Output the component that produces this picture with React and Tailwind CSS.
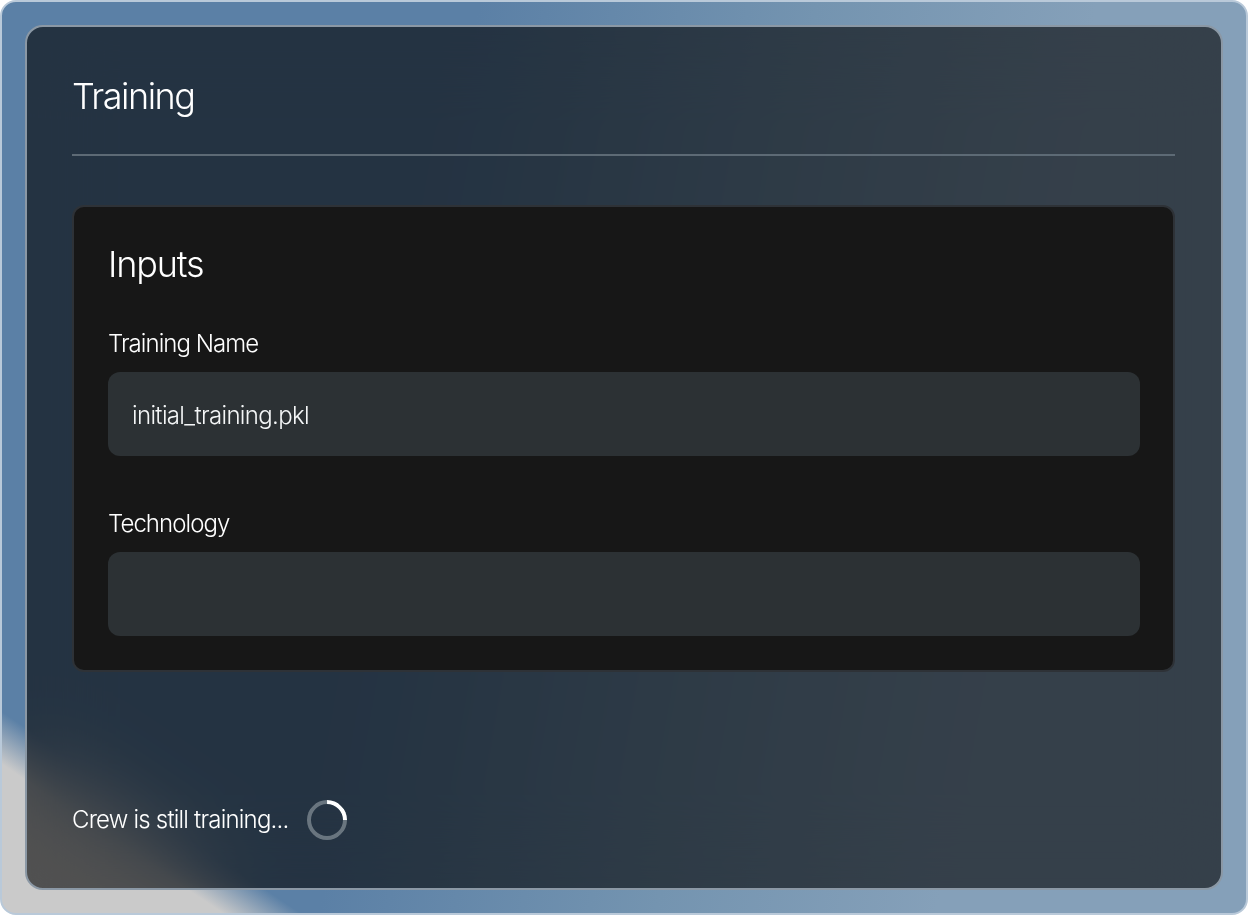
export default function App() {
  const field = "h-[84px] w-full rounded-xl bg-[#2c3134] px-6 pt-[3px] flex items-center text-[24px] font-[350] text-[#f4f6f7] tracking-[-0.65px]";
  return (
    <div className="h-[915px] w-[1248px] overflow-hidden bg-white font-['Inter',sans-serif]">
      <div className="h-[915px] w-[1248px] rounded-[16px] border-[2px] border-[#b9c9d9] p-[23px] bg-[linear-gradient(214deg,transparent_88.5%,#cacaca_91.5%),linear-gradient(100deg,#5b80a6_0%,#5b80a6_34%,#7494b0_58%,#85a0b9_78%,#85a0b9_100%)]">
        <div className="flex h-[865px] w-[1198px] flex-col rounded-[18px] border-2 border-[#8b98a5] bg-black/60 pl-[45px] pr-[46px] pt-[45px] backdrop-blur-2xl">
          <h1 className="text-[36px] leading-[48px] font-[350] text-white tracking-[-1.5px]">Training</h1>
          <div className="mt-[34px] h-[2px] w-full bg-[#5d6a75]" />
          <div className="mt-[49px] flex h-[467px] flex-col rounded-xl border-2 border-[#2e3237] bg-[#171717] pl-[34px] pr-[33px] pt-[33px] text-white">
            <h2 className="text-[36px] leading-[48px] font-[350] tracking-[-1.2px]">Inputs</h2>
            <label className="mt-[40px] text-[24px] leading-[32px] font-[350] tracking-[-0.95px]">Training Name</label>
            <div className={"mt-[12px] " + field}>initial_training.pkl</div>
            <label className="mt-[52px] text-[24px] leading-[32px] font-[350] tracking-[-0.95px]">Technology</label>
            <div className={"mt-[12px] " + field}></div>
          </div>
          <div className="mt-[128px] flex items-center gap-[18px] text-white">
            <span className="text-[24px] leading-[40px] font-[350] tracking-[-0.8px]">Crew is still training...</span>
            <div className="h-10 w-10 rotate-45 rounded-full border-4 border-[#69757f] border-t-white" />
          </div>
        </div>
      </div>
    </div>
  );
}
